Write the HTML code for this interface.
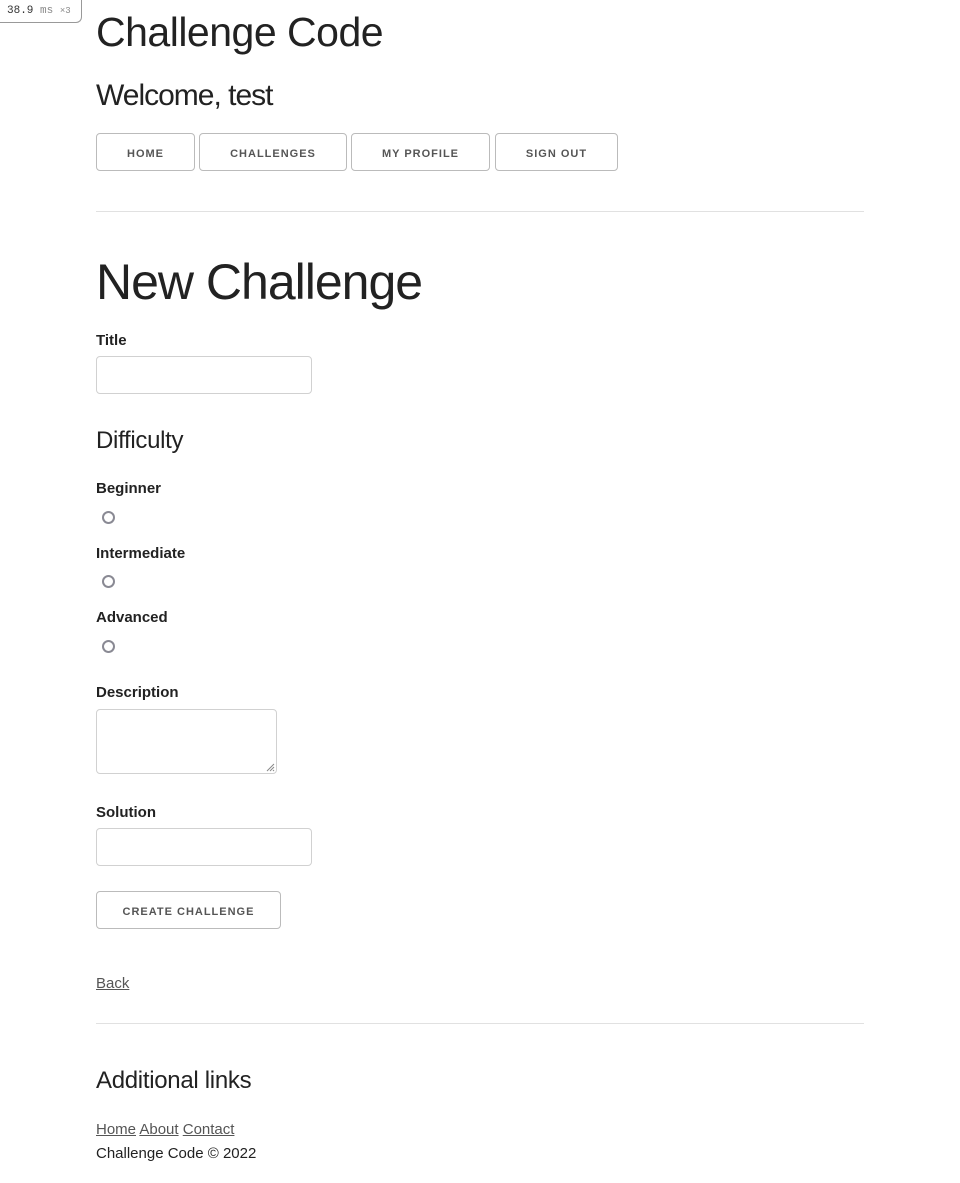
<!DOCTYPE html>
<html><head><meta charset="utf-8"><style>
*{box-sizing:border-box;margin:0;padding:0}
body{width:960px;height:1183px;position:relative;background:#fff;font-family:"Liberation Sans",Helvetica,Arial,sans-serif;color:#222;overflow:hidden}
.a{position:absolute;white-space:nowrap}
.btn{position:absolute;height:38px;border:1px solid #bbb;border-radius:4px;font-size:11px;font-weight:bold;letter-spacing:1px;color:#555;text-align:center;line-height:41px;text-transform:uppercase}
.lbl{position:absolute;font-size:15px;font-weight:bold;color:#222}
.inp{position:absolute;border:1px solid #d1d1d1;border-radius:4px;background:#fff}
.radio{position:absolute;width:13px;height:13px;border:2px solid #8a8a94;border-radius:50%}
hr{position:absolute;left:96px;width:768px;border:0;border-top:1px solid #e1e1e1}
a{color:#555;text-decoration:underline}
</style></head><body>
<div class="a" style="left:0;top:-1px;width:82px;height:24px;border:1px solid #999;border-top:0;border-left:0;border-radius:0 0 6px 0;font-family:'Liberation Mono',monospace;font-size:11px;line-height:24px;padding-left:7px;color:#333">38.9<span style="color:#888"> ms <span style="font-size:9px">×3</span></span></div>
<div class="a" style="left:96px;top:7px;font-size:41px;letter-spacing:-0.5px;line-height:50px">Challenge Code</div>
<div class="a" style="left:96px;top:78px;font-size:30px;letter-spacing:-1px;line-height:36px">Welcome, test</div>
<div class="btn" style="left:96px;top:133px;width:99px">Home</div>
<div class="btn" style="left:199px;top:133px;width:148px">Challenges</div>
<div class="btn" style="left:351px;top:133px;width:139px">My Profile</div>
<div class="btn" style="left:495px;top:133px;width:123px">Sign Out</div>
<hr style="top:211px">
<div class="a" style="left:96px;top:252px;font-size:50px;letter-spacing:-1px;line-height:60px">New Challenge</div>
<div class="lbl" style="left:96px;top:332px">Title</div>
<div class="inp" style="left:96px;top:356px;width:216px;height:38px"></div>
<div class="a" style="left:96px;top:426px;font-size:24px;letter-spacing:-0.3px;line-height:30px">Difficulty</div>
<div class="lbl" style="left:96px;top:480px">Beginner</div>
<div class="radio" style="left:102px;top:511px"></div>
<div class="lbl" style="left:96px;top:545px">Intermediate</div>
<div class="radio" style="left:102px;top:575px"></div>
<div class="lbl" style="left:96px;top:609px">Advanced</div>
<div class="radio" style="left:102px;top:640px"></div>
<div class="lbl" style="left:96px;top:684px">Description</div>
<div class="inp" style="left:96px;top:709px;width:181px;height:65px"><svg style="position:absolute;right:1px;bottom:1px" width="9" height="9"><path d="M8 1L1 8M8 4L4 8M8 7L7 8" stroke="#888" stroke-width="1"/></svg></div>
<div class="lbl" style="left:96px;top:804px">Solution</div>
<div class="inp" style="left:96px;top:828px;width:216px;height:38px"></div>
<div class="btn" style="left:96px;top:891px;width:185px">Create Challenge</div>
<a class="a" style="left:96px;top:975px;font-size:15px">Back</a>
<hr style="top:1023px">
<div class="a" style="left:96px;top:1066px;font-size:24px;letter-spacing:-0.3px;line-height:30px">Additional links</div>
<div class="a" style="left:96px;top:1121px;font-size:15px"><a>Home</a> <a>About</a> <a>Contact</a></div>
<div class="a" style="left:96px;top:1145px;font-size:15px">Challenge Code © 2022</div>
</body></html>
